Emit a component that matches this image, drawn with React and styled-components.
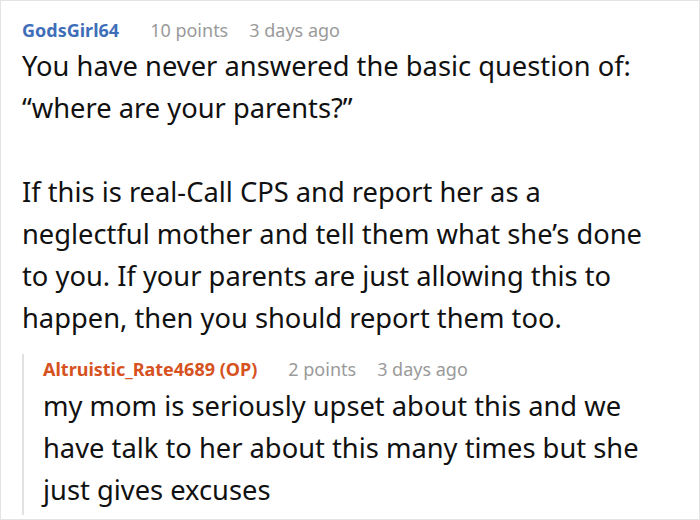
import React from 'react'
import styled, { createGlobalStyle } from 'styled-components'

const Global = createGlobalStyle`
  body {
    margin: 0;
    background: #fff;
    font-family: "Noto Sans", "Open Sans", sans-serif;
  }
`

const Frame = styled.div`
  box-sizing: border-box;
  width: 700px;
  height: 520px;
  border: 1px solid #e3e3e3;
  padding: 15px 6px 0 21px;
  overflow: hidden;
`

const Header = styled.div`
  display: flex;
  align-items: baseline;
  gap: 21px;
  font-size: 18px;
  line-height: 28px;
`

const Author = styled.span`
  font-weight: 700;
  margin-right: 10px;
  color: ${p => (p.$op ? '#d6521f' : '#3f6eb9')};
`

const Meta = styled.span`
  color: #9a9a9a;
`

const Body = styled.div`
  font-size: 27.3px;
  line-height: 42px;
  color: #111;
  margin-top: ${p => (p.$reply ? '2px' : '1px')};
  white-space: nowrap;
`

const Para = styled.p`
  margin: 0 0 42px;
  &:last-child {
    margin-bottom: 0;
  }
`

const Reply = styled.div`
  margin-top: 15px;
  padding: 1px 0 4px 19px;
  border-left: 2px solid #e1e1e1;
`

const Comment = ({ author, op, points, age, children }) => (
  <>
    <Header>
      <Author $op={op}>{author}</Author>
      <Meta>{points} points</Meta>
      <Meta>{age}</Meta>
    </Header>
    <Body $reply={op}>{children}</Body>
  </>
)

export default function App() {
  return (
    <>
      <Global />
      <Frame>
        <Comment author="GodsGirl64" points={10} age="3 days ago">
          <Para>
            You have never answered the basic question of:
            <br />
            “where are your parents?”
          </Para>
          <Para>
            If this is real-Call CPS and report her as a
            <br />
            neglectful mother and tell them what she’s done
            <br />
            to you. If your parents are just allowing this to
            <br />
            happen, then you should report them too.
          </Para>
        </Comment>
        <Reply>
          <Comment author="Altruistic_Rate4689 (OP)" op points={2} age="3 days ago">
            <Para>
              my mom is seriously upset about this and we
              <br />
              have talk to her about this many times but she
              <br />
              just gives excuses
            </Para>
          </Comment>
        </Reply>
      </Frame>
    </>
  )
}
